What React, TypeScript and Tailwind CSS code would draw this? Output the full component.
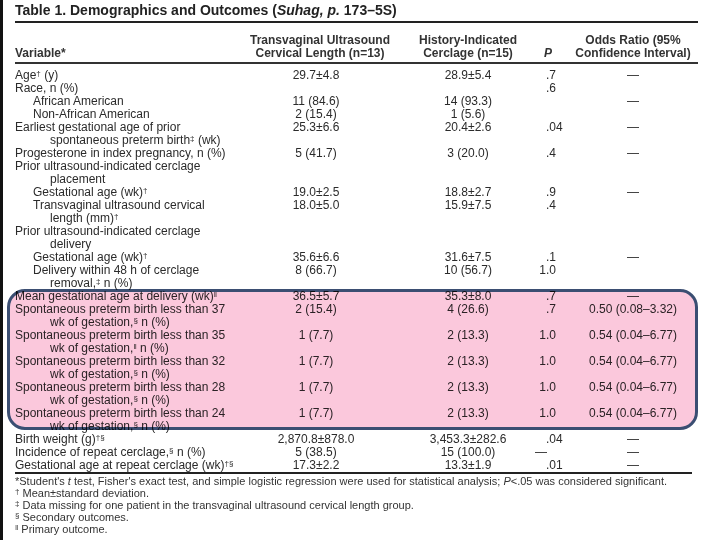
import type { ReactNode } from "react";

type Row = {
  label: ReactNode;
  indent?: 0 | 1 | 2;
  tv?: string;
  hi?: string;
  p?: string;
  or?: string;
};

const indentClass = {
  0: "pl-0",
  1: "pl-[18px]",
  2: "pl-[35px]",
};

// small raised footnote mark
const S = ({ children }: { children: ReactNode }) => (
  <sup className="text-[8px] top-[-0.35em]">{children}</sup>
);

const rows: Row[] = [
  { label: <>Age<S>†</S> (y)</>, tv: "29.7±4.8", hi: "28.9±5.4", p: ".7", or: "—" },
  { label: "Race, n (%)", p: ".6" },
  { label: "African American", indent: 1, tv: "11 (84.6)", hi: "14 (93.3)", or: "—" },
  { label: "Non-African American", indent: 1, tv: "2 (15.4)", hi: "1 (5.6)" },
  { label: "Earliest gestational age of prior", tv: "25.3±6.6", hi: "20.4±2.6", p: ".04", or: "—" },
  { label: <>spontaneous preterm birth<S>‡</S> (wk)</>, indent: 2 },
  { label: "Progesterone in index pregnancy, n (%)", tv: "5 (41.7)", hi: "3 (20.0)", p: ".4", or: "—" },
  { label: "Prior ultrasound-indicated cerclage" },
  { label: "placement", indent: 2 },
  { label: <>Gestational age (wk)<S>†</S></>, indent: 1, tv: "19.0±2.5", hi: "18.8±2.7", p: ".9", or: "—" },
  { label: "Transvaginal ultrasound cervical", indent: 1, tv: "18.0±5.0", hi: "15.9±7.5", p: ".4" },
  { label: <>length (mm)<S>†</S></>, indent: 2 },
  { label: "Prior ultrasound-indicated cerclage" },
  { label: "delivery", indent: 2 },
  { label: <>Gestational age (wk)<S>†</S></>, indent: 1, tv: "35.6±6.6", hi: "31.6±7.5", p: ".1", or: "—" },
  { label: "Delivery within 48 h of cerclage", indent: 1, tv: "8 (66.7)", hi: "10 (56.7)", p: "1.0" },
  { label: <>removal,<S>‡</S> n (%)</>, indent: 2 },
  { label: <>Mean gestational age at delivery (wk)<S>‖</S></>, tv: "36.5±5.7", hi: "35.3±8.0", p: ".7", or: "—" },
  { label: "Spontaneous preterm birth less than 37", tv: "2 (15.4)", hi: "4 (26.6)", p: ".7", or: "0.50 (0.08–3.32)" },
  { label: <>wk of gestation,<S>§</S> n (%)</>, indent: 2 },
  { label: "Spontaneous preterm birth less than 35", tv: "1 (7.7)", hi: "2 (13.3)", p: "1.0", or: "0.54 (0.04–6.77)" },
  { label: <>wk of gestation,<S>‖</S> n (%)</>, indent: 2 },
  { label: "Spontaneous preterm birth less than 32", tv: "1 (7.7)", hi: "2 (13.3)", p: "1.0", or: "0.54 (0.04–6.77)" },
  { label: <>wk of gestation,<S>§</S> n (%)</>, indent: 2 },
  { label: "Spontaneous preterm birth less than 28", tv: "1 (7.7)", hi: "2 (13.3)", p: "1.0", or: "0.54 (0.04–6.77)" },
  { label: <>wk of gestation,<S>§</S> n (%)</>, indent: 2 },
  { label: "Spontaneous preterm birth less than 24", tv: "1 (7.7)", hi: "2 (13.3)", p: "1.0", or: "0.54 (0.04–6.77)" },
  { label: <>wk of gestation,<S>§</S> n (%)</>, indent: 2 },
  { label: <>Birth weight (g)<S>†§</S></>, tv: "2,870.8±878.0", hi: "3,453.3±282.6", p: ".04", or: "—" },
  { label: <>Incidence of repeat cerclage,<S>§</S> n (%)</>, tv: "5 (38.5)", hi: "15 (100.0)", p: "—", or: "—" },
  { label: <>Gestational age at repeat cerclage (wk)<S>†§</S></>, tv: "17.3±2.2", hi: "13.3±1.9", p: ".01", or: "—" },
];

function PValue({ v }: { v?: string }) {
  if (!v) return null;
  if (v === "—") return <span className="pl-[7px]">—</span>;
  const i = v.indexOf(".");
  return (
    <>
      <span className="inline-block w-[18px] text-right">{v.slice(0, i)}</span>
      <span>{v.slice(i)}</span>
    </>
  );
}

export default function App() {
  return (
    <div className="relative w-[720px] h-[540px] overflow-hidden bg-white border-l-[3px] border-[#111] pl-[12px] pt-[3px] text-[#2b2b2b] font-['Liberation_Sans',Arial,sans-serif]">
      <div className="h-[15px] leading-[15px] text-[14px] font-bold text-[#222]">
        Table 1. Demographics and Outcomes (<i>Suhag, p.</i> 173–5S)
      </div>
      <div className="mt-[3px] h-[2px] w-[683px] bg-[#222]" />

      {/* header */}
      <div className="flex pt-[11px] pb-[2px] text-[12px] leading-[13px] font-bold text-[#333]">
        <div className="w-[241px] flex flex-col justify-end">Variable*</div>
        <div className="w-[120px] flex flex-col items-center whitespace-nowrap pl-[8px]">
          <span>Transvaginal Ultrasound</span>
          <span>Cervical Length (n=13)</span>
        </div>
        <div className="ml-[32px] w-[120px] flex flex-col items-center whitespace-nowrap">
          <span>History-Indicated</span>
          <span>Cerclage (n=15)</span>
        </div>
        <div className="w-[40px] flex flex-col justify-end pl-[16px]">
          <i>P</i>
        </div>
        <div className="w-[130px] flex flex-col items-center whitespace-nowrap">
          <span>Odds Ratio (95%</span>
          <span>Confidence Interval)</span>
        </div>
      </div>
      <div className="h-[1.5px] w-[683px] bg-[#333]" />

      {/* body */}
      <div className="pt-[5px] text-[12px] leading-[13px]">
        {rows.map((r, i) => (
          <div key={i} className="flex h-[13px] whitespace-nowrap">
            <div className={`w-[241px] ${indentClass[r.indent ?? 0]}`}>{r.label}</div>
            <div className="w-[120px] text-center">{r.tv}</div>
            <div className="ml-[32px] w-[120px] text-center">{r.hi}</div>
            <div className="w-[40px]">
              <PValue v={r.p} />
            </div>
            <div className="w-[130px] text-center">{r.or}</div>
          </div>
        ))}
      </div>
      <div className="h-[2px] w-[677px] bg-[#222]" />

      {/* footnotes */}
      <div className="pt-[1px] text-[11px] leading-[12px] text-[#333] whitespace-nowrap">
        <div>
          *Student's <i>t</i> test, Fisher's exact test, and simple logistic regression were used for statistical
          analysis; <i>P</i>&lt;.05 was considered significant.
        </div>
        <div>
          <S>†</S> Mean±standard deviation.
        </div>
        <div>
          <S>‡</S> Data missing for one patient in the transvaginal ultrasound cervical length group.
        </div>
        <div>
          <S>§</S> Secondary outcomes.
        </div>
        <div>
          <S>‖</S> Primary outcome.
        </div>
      </div>

      {/* highlight */}
      <div className="absolute left-[4px] top-[289px] w-[691px] h-[141px] rounded-[18px] border-[3px] border-[#3b4e72] bg-[#fbc8dc] mix-blend-multiply pointer-events-none" />
    </div>
  );
}
